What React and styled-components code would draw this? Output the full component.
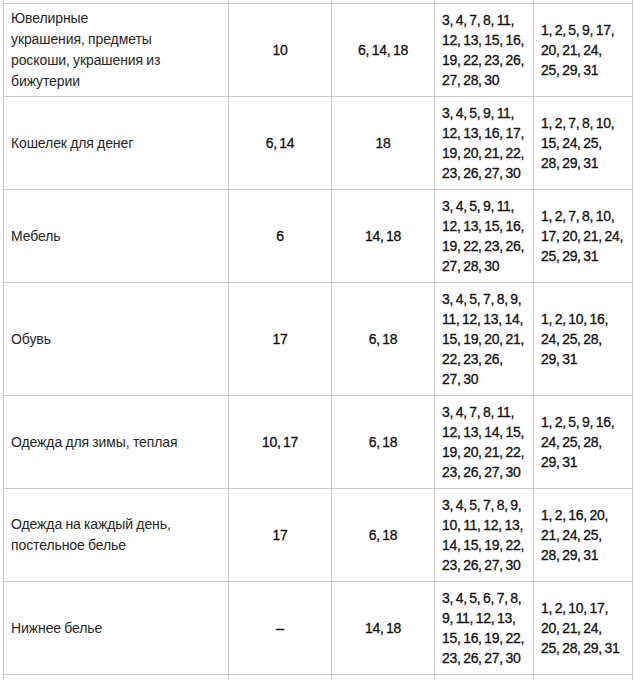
import React from 'react';
import styled, { createGlobalStyle } from 'styled-components';

const GlobalStyle = createGlobalStyle`
    body {
        margin: 0;
        background: #fff;
        font-family: "Liberation Sans", Arial, sans-serif;
    }
`

const Page = styled.div`
    padding-left: 3px;
    height: 680px;
    overflow: hidden;
`

const Grid = styled.div`
    display: grid;
    grid-template-columns: 225px 103px 103px 99px 99px;
    border-left: 1px solid #c9c9c9;
    width: 629px;
`

const Cell = styled.div`
    display: flex;
    flex-direction: column;
    justify-content: center;
    align-items: ${p => (p.$center ? 'center' : 'flex-start')};
    border-right: 1px solid #c9c9c9;
    border-bottom: 1px solid #c9c9c9;
    padding: 6px 7px;
    font-size: 14px;
    line-height: 20px;
    letter-spacing: -0.3px;
    word-spacing: -1px;
    color: #111;
    -webkit-text-stroke: 0.3px #111;
    white-space: nowrap;
`

const NameCell = styled(Cell)`
    padding: 4px 7px;
    line-height: 21px;
    letter-spacing: -0.1px;
    word-spacing: -0.5px;
    color: #262626;
    -webkit-text-stroke: 0;
`

const StubCell = styled.div`
    height: ${p => p.$h}px;
    border-right: 1px solid #c9c9c9;
    border-bottom: ${p => (p.$open ? 'none' : '1px solid #c9c9c9')};
`

const Line = styled.span`
    display: block;
`

const rows = [
    {
        name: ['Ювелирные', 'украшения, предметы', 'роскоши, украшения из', 'бижутерии'],
        good: '10',
        bad: '6, 14, 18',
        days: ['3, 4, 7, 8, 11,', '12, 13, 15, 16,', '19, 22, 23, 26,', '27, 28, 30'],
        other: ['1, 2, 5, 9, 17,', '20, 21, 24,', '25, 29, 31'],
    },
    {
        name: ['Кошелек для денег'],
        good: '6, 14',
        bad: '18',
        days: ['3, 4, 5, 9, 11,', '12, 13, 16, 17,', '19, 20, 21, 22,', '23, 26, 27, 30'],
        other: ['1, 2, 7, 8, 10,', '15, 24, 25,', '28, 29, 31'],
    },
    {
        name: ['Мебель'],
        good: '6',
        bad: '14, 18',
        days: ['3, 4, 5, 9, 11,', '12, 13, 15, 16,', '19, 22, 23, 26,', '27, 28, 30'],
        other: ['1, 2, 7, 8, 10,', '17, 20, 21, 24,', '25, 29, 31'],
    },
    {
        name: ['Обувь'],
        good: '17',
        bad: '6, 18',
        days: ['3, 4, 5, 7, 8, 9,', '11, 12, 13, 14,', '15, 19, 20, 21,', '22, 23, 26,', '27, 30'],
        other: ['1, 2, 10, 16,', '24, 25, 28,', '29, 31'],
    },
    {
        name: ['Одежда для зимы, теплая'],
        good: '10, 17',
        bad: '6, 18',
        days: ['3, 4, 7, 8, 11,', '12, 13, 14, 15,', '19, 20, 21, 22,', '23, 26, 27, 30'],
        other: ['1, 2, 5, 9, 16,', '24, 25, 28,', '29, 31'],
    },
    {
        name: ['Одежда на каждый день,', 'постельное белье'],
        good: '17',
        bad: '6, 18',
        days: ['3, 4, 5, 7, 8, 9,', '10, 11, 12, 13,', '14, 15, 19, 22,', '23, 26, 27, 30'],
        other: ['1, 2, 16, 20,', '21, 24, 25,', '28, 29, 31'],
    },
    {
        name: ['Нижнее белье'],
        good: '–',
        bad: '14, 18',
        days: ['3, 4, 5, 6, 7, 8,', '9, 11, 12, 13,', '15, 16, 19, 22,', '23, 26, 27, 30'],
        other: ['1, 2, 10, 17,', '20, 21, 24,', '25, 28, 29, 31'],
    },
]

const Lines = ({ items }) => items.map((t, i) => <Line key={i}>{t}</Line>)

export default function App() {
    return (
        <>
            <GlobalStyle />
            <Page>
                <Grid>
                    {[0, 1, 2, 3, 4].map(i => <StubCell key={i} $h={3} />)}
                    {rows.map((r, i) => (
                        <React.Fragment key={i}>
                            <NameCell><Lines items={r.name} /></NameCell>
                            <Cell $center>{r.good}</Cell>
                            <Cell $center>{r.bad}</Cell>
                            <Cell><Lines items={r.days} /></Cell>
                            <Cell><Lines items={r.other} /></Cell>
                        </React.Fragment>
                    ))}
                    {[0, 1, 2, 3, 4].map(i => <StubCell key={'b' + i} $h={20} $open />)}
                </Grid>
            </Page>
        </>
    );
}
